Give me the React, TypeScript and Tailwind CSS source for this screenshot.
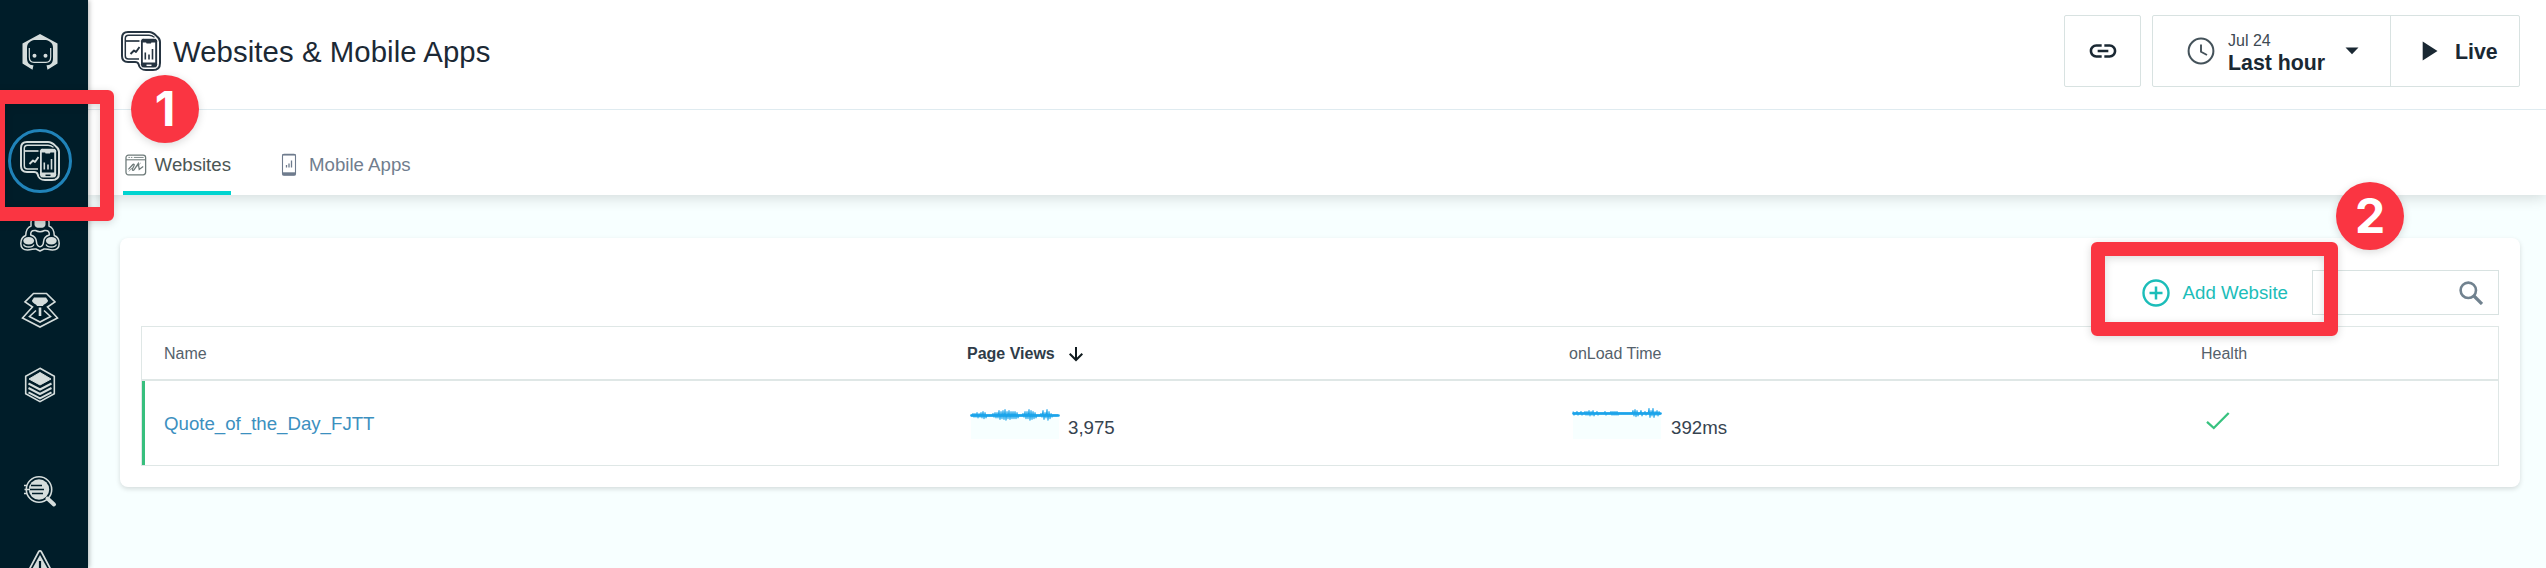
import React from "react";

type IconProps = { className?: string };

function DevicesIcon({ className, fill }: IconProps & { fill: string }) {
  return (
    <svg viewBox="0 0 40 40" className={className} fill="none" stroke="currentColor" strokeLinejoin="round">
      <path
        d="M7 1H28C32 1 34 3.500 36 5.500C38 7 39 8 39 11V32C39 37 36.500 39 32 39H25C20 39 18.500 37 17.500 33C17 31.500 16 31 14 31H7C3 31 1 29 1 25V7C1 3 3 1 7 1Z"
        fill={fill}
        strokeWidth="2"
      />
      <path d="M18 28H7.500C5 28 4.300 27 4.300 25V7.500C4.300 5 5.500 4.200 7.500 4.200H28C31 4.200 32 5 33.500 6.500" strokeWidth="1.500" />
      <path d="M5 10H18.500" strokeWidth="1.700" />
      <path d="M9.500 23L13 19.500L15 21L18.500 16" strokeWidth="1.900" />
      <path d="M22.500 7.200H33C35.500 7.200 36.700 8.500 36.700 10.500V33.500C36.700 36 35 37 33 37H23C21 37 19.500 36 19.500 33.500V10.500C19.500 8.500 20.500 7.200 22.500 7.200Z" fill="currentColor" stroke={fill} strokeWidth="1" />
      <rect x="21.800" y="11.500" width="12.400" height="20" fill={fill} stroke="none" />
      <path d="M24.500 9.200H31L30 12.500H25.500Z" fill="currentColor" stroke="none" />
      <path d="M24.300 21.500V28.500M28 23.500V28.500M31.500 18V28.500" strokeWidth="1.600" />
      <path d="M25.500 34.300H30.500" stroke={fill} strokeWidth="1.500" />
    </svg>
  );
}

function LogoIcon({ className }: IconProps) {
  return (
    <svg viewBox="0 0 40 40" className={className} fill="none">
      <path d="M20 2L37.500 11.500V31.500L27.500 37.700L26.500 33H13.500L12.500 37.700L2.500 31.500V11.500Z" fill="currentColor" />
      <path d="M14 8H26C31 9.500 33 12 33 16V26C33 30.500 31 33.200 27 33.200H13C9 33.200 7 30.500 7 26V16C7 12 9 9.500 14 8Z" fill="#001d29" />
      <path d="M9.300 16V25C9.300 28.800 11 30.300 14 30.300H26C29 30.300 30.700 28.800 30.700 25V16" stroke="currentColor" strokeWidth="1.200" />
      <circle cx="14.500" cy="23.800" r="2" fill="currentColor" />
      <circle cx="25.500" cy="23.800" r="2" fill="currentColor" />
    </svg>
  );
}

function NodesIcon({ className }: IconProps) {
  return (
    <svg viewBox="0 0 40 40" className={className} fill="none" stroke="currentColor" strokeWidth="1.500" strokeLinejoin="round">
      <path d="M11 10V7C11 3.500 14 1 20 1C26 1 29 3.500 29 7V11C32.500 12.500 34 14.500 34.300 20.500C38 22 39.200 25 39.200 28.500C39.200 33 36.500 35 32.500 35C28.500 35 26.500 33.500 24 34L20 36L16 34C13.500 33.500 11.500 35 7.500 35C3.500 35 0.800 33 0.800 28.500C0.800 25 2 22 5.700 20.500C6 14.500 7.500 12.500 11 11Z" />
      <path d="M15.500 15.500C11.500 15 10.500 17 10.700 20C14.500 21 16.300 23.500 16.500 27C16.500 30 18.500 31.700 20 31.700C21.500 31.700 23.500 30 23.500 27C23.700 23.500 25.500 21 29.300 20C29.500 17 28.500 15 24.500 15.500C22 16.800 18 16.800 15.500 15.500Z" />
      <path d="M14.500 5H25.500V9C25.500 12 23.500 12.800 20 12.800C16.500 12.800 14.500 12 14.500 9Z" fill="currentColor" stroke="none" />
      <ellipse cx="8.700" cy="25.700" rx="5.400" ry="3.800" fill="currentColor" stroke="none" />
      <ellipse cx="31.300" cy="25.700" rx="5.400" ry="3.800" fill="currentColor" stroke="none" />
      <path d="M3.500 29.500C5 32.800 12.500 32.800 14 29.500M26 29.500C27.500 32.800 35 32.800 36.500 29.500" strokeWidth="1.300" />
    </svg>
  );
}

function PlatformIcon({ className }: IconProps) {
  return (
    <svg viewBox="0 0 40 40" className={className} fill="none" stroke="currentColor" strokeWidth="1.600">
      <path d="M13.500 3.500H26.500L35 12L27.500 17L37.500 28L20 37L2.500 28L12.500 17L5 12Z" />
      <path d="M14 7.500H26L28 10.500C28 13 23 14.500 23 16H17C17 14.500 12 13 12 10.500Z" fill="currentColor" stroke="none" />
      <path d="M16 20.500L9.500 26.500L20 32L30.500 26.500L24 20.500" />
      <path d="M20 17.500V26" strokeWidth="2.600" />
    </svg>
  );
}

function LayersIcon({ className }: IconProps) {
  return (
    <svg viewBox="0 0 40 40" className={className} fill="none" stroke="currentColor">
      <path d="M20 3.300L34.300 11.200V28.800L20 36.700L5.700 28.800V11.200Z" strokeWidth="1.600" />
      <path d="M20 7.500L31 14L20 20L9 14Z" fill="currentColor" strokeWidth="1" />
      <path d="M8.500 18.500L20 24.500L31.500 18.500M8.500 23L20 29L31.500 23M8.500 27.300L20 33.300L31.500 27.300" strokeWidth="2" />
    </svg>
  );
}

function AnalyzeIcon({ className }: IconProps) {
  return (
    <svg viewBox="0 0 40 40" className={className} fill="none" stroke="currentColor">
      <circle cx="19" cy="17.500" r="12.700" strokeWidth="1.600" />
      <circle cx="19" cy="17.500" r="10.200" fill="currentColor" stroke="none" />
      <path d="M11 13.500H22M9 17.500H24M12 21.500H23" stroke="#001d29" strokeWidth="1.300" />
      <path d="M4 13.500H7M4.500 17.500H10M4 21.500H7" strokeWidth="1.500" />
      <path d="M27.500 26.500L34 32.500" strokeWidth="4" strokeLinecap="round" />
    </svg>
  );
}

function AlertIcon({ className }: IconProps) {
  return (
    <svg viewBox="0 0 40 40" className={className} fill="none" stroke="currentColor" strokeLinejoin="round">
      <path d="M18.500 5C19.300 3.600 20.700 3.600 21.500 5L38 36H2Z" strokeWidth="1.700" />
      <path d="M20 8L34.500 34H5.500Z" fill="currentColor" stroke="none" />
      <path d="M20 14V25" stroke="#001d29" strokeWidth="2.200" />
    </svg>
  );
}

function WebsiteTabIcon() {
  return (
    <svg viewBox="0 0 22 22" className="h-[22px] w-[22px] text-[#6d7a79]" fill="none" stroke="currentColor">
      <rect x="1" y="1" width="20" height="20" rx="2.500" strokeWidth="1.300" />
      <path d="M1 5.700H21" strokeWidth="1.100" />
      <path d="M3.500 3.300H5M6 3.300H7.500M9 3.300H19" strokeWidth="0.900" />
      <path d="M3.500 15.500L8 10.500C9 9.500 10 10.500 9 12L7.500 15C7 16.500 8.500 17 9.500 15.500L13.500 9.500L14.500 15.500L18.500 12.500" strokeWidth="1.300" />
      <path d="M4 17.500L7 14M12 12.500L16 9" strokeWidth="0.700" />
    </svg>
  );
}

function MobileTabIcon() {
  return (
    <svg viewBox="0 0 16 24" className="h-6 w-4 text-[#6e7b8d]" fill="none" stroke="currentColor">
      <rect x="1.500" y="1.300" width="13" height="21" rx="1.500" strokeWidth="1.100" />
      <path d="M1.500 1.800H14.500" strokeWidth="1.500" />
      <path d="M1.500 20.800H14.500" strokeWidth="3" />
      <path d="M5.500 12V14.500M8 10.500V14.500M10.500 7.500V14.500" strokeWidth="1.300" />
    </svg>
  );
}

const viewsEnvelope = [1, 2, 2, 3, 2, 3, 4, 3, 1, 1, 1, 2, 3, 3, 5, 4, 5, 6, 4, 5, 4, 4, 4, 3, 1, 1, 2, 4, 4, 6, 5, 4, 3, 1, 1, 2, 5, 3, 6, 4, 2, 1, 1, 1];
const loadEnvelope = [2, 1, 2, 1, 2, 1, 2, 2, 3, 2, 3, 1, 2, 1, 1, 1, 2, 1, 1, 2, 2, 2, 2, 1, 1, 1, 1, 1, 1, 1, 3, 4, 3, 1, 3, 1, 2, 1, 5, 3, 5, 2, 3, 2];

function Sparkline({ values, baseline }: { values: number[]; baseline: number }) {
  const points = values
    .flatMap((v, i) => [`${i * 2 + 1},${baseline - v}`, `${i * 2 + 2},${baseline + v * 0.8}`])
    .join(" ");
  return (
    <svg viewBox="0 0 90 32" className="h-8 w-[90px] shrink-0">
      <rect x="1" y={baseline} width="88" height={31 - baseline} fill="#f7ffff" />
      <path d={`M1.500 ${baseline}H88.500`} stroke="#1ba4ea" strokeWidth="2.600" strokeLinecap="round" />
      <polyline points={points} fill="none" stroke="#1ba4ea" strokeWidth="1.100" strokeLinejoin="round" />
    </svg>
  );
}

function Sidebar() {
  return (
    <nav className="relative z-10 flex h-[568px] w-[88px] shrink-0 flex-col overflow-hidden bg-[#001d29] pl-2 text-[#d5dddc] shadow-[1px_0_5px_rgba(0,0,0,0.3)]">
      <div className="flex w-16 shrink-0 flex-col items-center pt-8">
        <LogoIcon className="h-10 w-10 shrink-0" />
        <div className="mt-[57px] flex h-16 w-16 shrink-0 items-center justify-center rounded-full border-[3px] border-[#2083b9]">
          <DevicesIcon className="h-10 w-10 shrink-0" fill="#001d29" />
        </div>
        <NodesIcon className="mt-[22px] h-10 w-10 shrink-0" />
        <PlatformIcon className="mt-[35px] h-10 w-10 shrink-0" />
        <LayersIcon className="mt-[35px] h-10 w-10 shrink-0" />
        <AnalyzeIcon className="mt-[67px] h-10 w-10 shrink-0" />
        <AlertIcon className="mt-[35px] h-10 w-10 shrink-0" />
      </div>
    </nav>
  );
}

function TopBar() {
  return (
    <header className="relative z-[1] flex h-[110px] items-start justify-between border-b border-[#dfebf0] bg-white pr-[26px] pl-[33px]">
      <div className="flex items-start gap-3 pt-[31px]">
        <DevicesIcon className="h-10 w-10 text-[#263441]" fill="#ffffff" />
        <h1 className="pt-px text-[29.330px] leading-10 tracking-[0.080px] text-[#1c2935]">Websites &amp; Mobile Apps</h1>
      </div>
      <div className="flex gap-[11px] pt-[15px] text-[#1a2833]">
        <button className="flex h-[72px] w-[77px] items-center justify-center rounded-xs border border-[#d8e2e1]">
          <svg viewBox="0 0 24 24" className="h-8 w-8" fill="currentColor">
            <path d="M3.900 12c0-1.710 1.390-3.100 3.100-3.100h4V7H7c-2.760 0-5 2.240-5 5s2.240 5 5 5h4v-1.900H7c-1.710 0-3.100-1.390-3.100-3.100zM8 13h8v-2H8v2zm9-6h-4v1.900h4c1.710 0 3.100 1.390 3.100 3.100s-1.390 3.100-3.100 3.100h-4V17h4c2.760 0 5-2.240 5-5s-2.240-5-5-5z" />
          </svg>
        </button>
        <div className="flex h-[72px] w-[368px] rounded-xs border border-[#d8e2e1]">
          <button className="flex w-[238px] items-center border-r border-[#d8e2e1] pl-[34px] text-left">
            <svg viewBox="0 0 28 28" className="h-7 w-7 text-[#44525a]" fill="none" stroke="currentColor">
              <circle cx="14" cy="14" r="12.400" strokeWidth="2" />
              <path d="M14 7.500V14.800L20 18" strokeWidth="1.900" />
            </svg>
            <span className="ml-[13px] block pt-0.5">
              <span className="block pt-px text-base leading-5 text-[#3d4953]">Jul 24</span>
              <span className="block text-[21.330px] leading-6 font-bold">Last hour</span>
            </span>
            <svg viewBox="0 0 14 8" className="ml-5 h-2 w-3.5">
              <path d="M0.500 0.500H13.500L7 7.300Z" fill="currentColor" />
            </svg>
          </button>
          <button className="flex flex-1 items-center pl-[31px]">
            <svg viewBox="0 0 16 20" className="h-5 w-4">
              <path d="M0.700 0.500L15.500 10L0.700 19.500Z" fill="currentColor" />
            </svg>
            <span className="ml-[17px] pt-0.5 text-[21.330px] leading-6 font-bold">Live</span>
          </button>
        </div>
      </div>
    </header>
  );
}

function Tabs() {
  return (
    <div className="relative flex h-[85px] items-stretch gap-[50px] bg-white pl-[35px] text-[18.670px] leading-[22px] shadow-[0_2px_14px_rgba(0,0,0,0.16)]">
      <div className="flex w-[108px] items-center gap-2 border-b-4 border-[#00d4d0] pt-11 pb-[15px] pl-[2px] whitespace-nowrap text-[#4b5654]">
        <WebsiteTabIcon />
        <span>Websites</span>
      </div>
      <div className="flex items-center gap-3 pt-11 pb-[19px] text-[#707d8e]">
        <MobileTabIcon />
        <span>Mobile Apps</span>
      </div>
    </div>
  );
}

function WebsitesTable() {
  return (
    <div className="border border-[#dfe7e6]">
      <div className="flex h-[54px] items-center border-b-2 border-[#dfe7e6] pt-0.5 pl-[22px] text-base text-[#54616b]">
        <div className="w-[803px]">Name</div>
        <div className="flex w-[602px] items-center font-bold text-[#2f3c48]">
          Page Views
          <svg viewBox="0 0 16 16" className="ml-[13px] h-4 w-4 text-[#111b1f]" fill="none" stroke="currentColor" strokeWidth="2">
            <path d="M8 1V14M1.700 7.800L8 14L14.300 7.800" />
          </svg>
        </div>
        <div className="w-[632px]">onLoad Time</div>
        <div>Health</div>
      </div>
      <div className="flex h-[84px] items-center border-l-[3px] border-[#37bf7d] pt-0.5 pl-[19px] text-[18.670px] text-[#36434f]">
        <div className="w-[803px] text-[#3c90bf]">Quote_of_the_Day_FJTT</div>
        <div className="flex w-[602px] items-center pl-[3px]">
          <Sparkline values={viewsEnvelope} baseline={7.500} />
          <span className="ml-2 pt-[7px]">3,975</span>
        </div>
        <div className="flex w-[637px] items-center pl-[3px]">
          <Sparkline values={loadEnvelope} baseline={5.500} />
          <span className="ml-[9px] pt-[7px]">392ms</span>
        </div>
        <svg viewBox="0 0 24 18" className="mb-1.5 h-[18px] w-6 text-[#37c27f]" fill="none" stroke="currentColor" strokeWidth="2.300">
          <path d="M1 9.800L7.800 16L22.700 1" />
        </svg>
      </div>
    </div>
  );
}

function Callout({ className }: IconProps) {
  return <div className={`pointer-events-none absolute z-20 rounded-md border-[14px] border-[#fa3542] ${className}`} />;
}

function StepBadge({ step, className }: IconProps & { step: number }) {
  return (
    <div
      className={`absolute z-20 flex h-[68px] w-[68px] items-center justify-center rounded-full bg-[#fa3542] font-[Inter,sans-serif] text-5xl font-bold text-white shadow-[0_2px_8px_rgba(0,0,0,0.15)] ${className}`}
    >
      {step}
    </div>
  );
}

export default function App() {
  return (
    <div className="relative flex h-[568px] w-[2546px] overflow-hidden bg-[#f7ffff] font-['Liberation_Sans',Arial,sans-serif]">
      <Sidebar />
      <main className="min-w-0 flex-1">
        <TopBar />
        <Tabs />
        <section className="mx-8 mt-[43px] mr-[26px] h-[249px] rounded-lg bg-white px-[21px] pt-8 shadow-[0_2px_5px_rgba(0,0,0,0.14)]">
          <div className="mb-[11px] flex h-[45px] justify-end">
            <button className="mr-6 flex items-center gap-[13px] text-[18.670px] text-[#1cbdb9]">
              <svg viewBox="0 0 28 28" className="h-7 w-7" fill="none" stroke="currentColor">
                <circle cx="14" cy="14" r="12.500" strokeWidth="2.400" />
                <path d="M14 7.500V20.500M7.500 14H20.500" strokeWidth="2.500" />
              </svg>
              Add Website
            </button>
            <div className="flex w-[187px] items-center justify-end border border-[#d8e2e1] pr-[15px]">
              <svg viewBox="0 0 24 24" className="h-6 w-6 text-[#71828f]" fill="none" stroke="currentColor">
                <circle cx="9.300" cy="9.300" r="7.700" strokeWidth="2.600" />
                <path d="M15 15L23 23" strokeWidth="3.200" />
              </svg>
            </div>
          </div>
          <WebsitesTable />
        </section>
      </main>
      <Callout className="top-[90px] -left-[9px] h-[131px] w-[123px] shadow-[0_2px_8px_rgba(0,0,0,0.15),inset_0_2px_8px_rgba(0,0,0,0.15)]" />
      <StepBadge step={1} className="top-[75px] left-[131px]" />
      <Callout className="top-[242px] left-[2091px] h-[94px] w-[247px] shadow-[0_2px_8px_rgba(0,0,0,0.15),inset_0_2px_8px_rgba(0,0,0,0.15)]" />
      <StepBadge step={2} className="top-[182px] left-[2336px]" />
    </div>
  );
}
